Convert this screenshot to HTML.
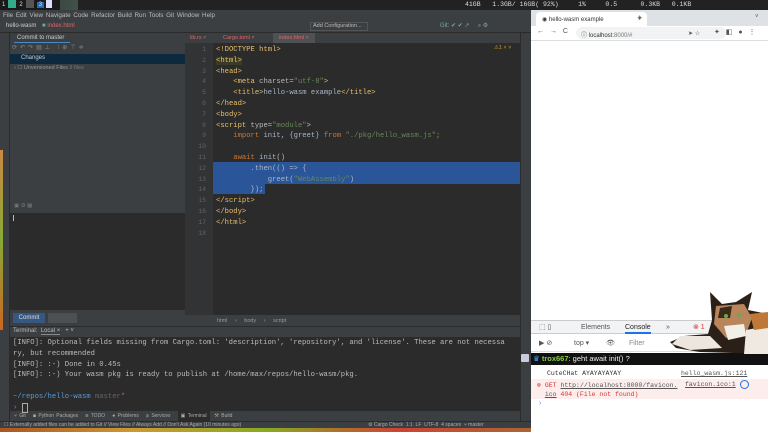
<!DOCTYPE html>
<html><head><style>
*{margin:0;padding:0;box-sizing:border-box}
body{width:768px;height:432px;overflow:hidden;position:relative;background:#5a4a2a;font-family:"Liberation Sans",sans-serif;font-size:6px;color:#bbb}
.a{position:absolute}
.mono{font-family:"Liberation Mono",monospace;font-size:7.2px;white-space:pre}
.t{color:#e8bf6a}.k{color:#cc7832}.s{color:#6a8759}.n{color:#a9b7c6}.at{color:#bababa}
</style></head><body>
<div class="a" style="left:0;top:0;width:768px;height:10px;background:linear-gradient(90deg,#2a3a2a,#6a7a8a 30%,#8a6a4a 50%,#3a4a5a 70%,#6a5a3a)"></div>
<div class="a" style="left:78px;top:0;width:690px;height:10px;background:#222;"></div>
<div class="a" style="left:0;top:0;width:60px;height:10px;background:#1a1a1a;color:#ddd;font-size:6px;line-height:10px"><span style="margin-left:2px">1</span><span style="display:inline-block;width:8px;height:8px;background:#3a8;margin:0 3px;vertical-align:middle"></span>2<span style="display:inline-block;width:8px;height:8px;background:#555;margin:0 3px;vertical-align:middle"></span><span style="background:#2a6ab0;padding:0 2px">3</span><span style="display:inline-block;width:6px;height:8px;background:#ddf;margin-left:2px;vertical-align:middle"></span></div>
<div class="a mono" style="left:465px;top:1px;color:#ddd;font-size:6.5px">41GB   1.3GB/ 16GB( 92%)     1%     0.5      0.3KB   0.1KB</div>
<div class="a" style="left:0;top:10px;width:531px;height:418px;background:#3c3f41"></div>
<div class="a" style="left:3px;top:12px;color:#bbb;font-size:6.3px;word-spacing:1px">File Edit View Navigate Code Refactor Build Run Tools Git Window Help</div>
<div class="a" style="left:6px;top:23px;color:#ccc;font-size:6px">hello-wasm <span style="color:#6a8;margin-left:4px">■</span> <span style="color:#d66">index.html</span></div>
<div class="a" style="left:310px;top:22px;width:58px;height:9px;border:1px solid #555;font-size:5.5px;color:#bbb;padding-left:2px;line-height:7px">Add Configuration...</div>
<div class="a" style="left:440px;top:22px;font-size:6px;color:#7a9">Git: ✔ ✔ ↗ &nbsp;&nbsp;&nbsp; ⌕ ⚙</div>
<div class="a" style="left:0;top:32px;width:531px;height:1px;background:#2b2b2b"></div>
<div class="a" style="left:0;top:33px;width:10px;height:388px;background:#3c3f41;border-right:1px solid #2b2b2b"></div>
<div class="a" style="left:0;top:150px;width:3px;height:180px;background:linear-gradient(#c84,#8a3,#c62)"></div>
<div class="a" style="left:10px;top:33px;width:175px;height:10px;color:#ccc;font-size:6px;padding:2px 0 0 7px">Commit to master<div class="a" style="left:4px;top:9px;width:56px;height:1px;background:#4a88c7"></div></div>
<div class="a" style="left:12px;top:44px;font-size:6px;color:#888;letter-spacing:3px">⟳↶↷▤⊥ ⁞⊕⊤≑</div>
<div class="a" style="left:10px;top:54px;width:175px;height:10px;background:#0d293e"></div>
<div class="a" style="left:21px;top:55px;color:#ccc;font-size:6px">Changes</div>
<div class="a" style="left:14px;top:65px;color:#999;font-size:5.5px">› ☐ Unversioned Files <span style="color:#777">9 files</span></div>
<div class="a" style="left:10px;top:203px;width:175px;height:10px;color:#777;font-size:5.5px;padding-left:4px">▣ ⚙ ▦</div>
<div class="a" style="left:10px;top:213px;width:175px;height:97px;background:#2b2b2b"></div>
<div class="a" style="left:13px;top:215px;width:1px;height:6px;background:#bbb"></div>
<div class="a" style="left:13px;top:313px;width:32px;height:10px;background:#365880;color:#ddd;font-size:6px;text-align:center;line-height:10px">Commit</div>
<div class="a" style="left:48px;top:313px;width:29px;height:10px;background:#4c5052"></div>
<div class="a" style="left:185px;top:33px;width:335px;height:10px;background:#3c3f41;font-size:5.5px;line-height:10px">
<span style="position:absolute;left:5px;color:#d66">lib.rs ×</span><span style="position:absolute;left:38px;color:#d66">Cargo.toml ×</span><span style="position:absolute;left:88px;width:42px;height:10px;background:#4e5254;color:#d66;padding-left:6px">index.html ×</span></div>
<div class="a" style="left:185px;top:43px;width:335px;height:272px;background:#2b2b2b"></div>
<div class="a" style="left:185px;top:43px;width:28px;height:272px;background:#313335"></div>
<div class="a mono" style="left:186px;top:45px;width:20px;text-align:right;color:#606366;line-height:10.8px;font-size:6.5px">1
2
3
4
5
6
7
8
9
10
11
12
13
14
15
16
17
18</div>
<div class="a" style="left:213px;top:162px;width:307px;height:22px;background:#2a5599"></div>
<div class="a" style="left:213px;top:184px;width:52px;height:10px;background:#2a5599"></div>
<div class="a mono" style="left:216px;top:45px;line-height:10.8px"><span class="t">&lt;!DOCTYPE html&gt;</span>
<span class="t" style="background:#3b3b25">&lt;html&gt;</span>
<span class="t">&lt;head&gt;</span>
    <span class="t">&lt;meta </span><span class="at">charset=</span><span class="s">"utf-8"</span><span class="t">&gt;</span>
    <span class="t">&lt;title&gt;</span><span class="n">hello-wasm example</span><span class="t">&lt;/title&gt;</span>
<span class="t">&lt;/head&gt;</span>
<span class="t">&lt;body&gt;</span>
<span class="t">&lt;script </span><span class="at">type=</span><span class="s">"module"</span><span class="t">&gt;</span>
    <span class="k">import </span><span class="n">init, {greet} </span><span class="k">from </span><span class="s">"./pkg/hello_wasm.js"</span><span class="k">;</span>

    <span class="k">await </span><span class="n">init()</span>
<span class="n">        .then(() =&gt; {</span>
<span class="n">            greet(</span><span class="s">"WebAssembly"</span><span class="n">)</span>
<span class="n">        });</span>
<span class="t">&lt;/script&gt;</span>
<span class="t">&lt;/body&gt;</span>
<span class="t">&lt;/html&gt;</span></div>
<div class="a" style="left:494px;top:45px;color:#c9a030;font-size:5.5px">⚠1 ˄ ˅</div>
<div class="a" style="left:520px;top:33px;width:11px;height:388px;background:#3c3f41;border-left:1px solid #2b2b2b"></div>
<div class="a" style="left:185px;top:315px;width:335px;height:11px;background:#3c3f41;color:#999;font-size:5.5px;padding:3px 0 0 32px;word-spacing:6px">html › body › script</div>
<div class="a" style="left:10px;top:326px;width:510px;height:1px;background:#2b2b2b"></div>
<div class="a" style="left:13px;top:328px;color:#bbb;font-size:6px">Terminal: &nbsp;<span style="border-bottom:1px solid #888">Local ×</span> &nbsp; + ˅</div>
<div class="a" style="left:10px;top:337px;width:510px;height:74px;background:#2b2b2b"></div>
<div class="a mono" style="left:13px;top:338px;line-height:10.8px;color:#bbb">[INFO]: Optional fields missing from Cargo.toml: 'description', 'repository', and 'license'. These are not necessa
ry, but recommended
[INFO]: :-) Done in 0.45s
[INFO]: :-) Your wasm pkg is ready to publish at /home/max/repos/hello-wasm/pkg.

<span style="color:#5a9bd5">~/repos/hello-wasm</span> <span style="color:#666">master</span><span style="color:#c66">*</span>
<span style="color:#b6b">›</span> <span style="border:1px solid #aaa">&nbsp;</span></div>
<div class="a" style="left:10px;top:411px;width:520px;height:10px;color:#aaa;font-size:5px;line-height:10px;padding-left:4px;word-spacing:1px">⑂ Git &nbsp; ▤ Python Packages &nbsp; ☰ TODO &nbsp; ● Problems &nbsp; ⚙ Services &nbsp; <span style="background:#2b2b2b;padding:2px 3px">▣ Terminal</span> &nbsp;⚒ Build</div>
<div class="a" style="left:0;top:421px;width:531px;height:8px;background:#3c3f41;border-top:1px solid #2b2b2b;color:#aaa;font-size:5px;line-height:7px;padding-left:4px">☐ Externally added files can be added to Git // View Files // Always Add // Don't Ask Again (10 minutes ago)<span style="position:absolute;left:368px">⚙ Cargo Check &nbsp;1:1 &nbsp;LF &nbsp;UTF-8 &nbsp;4 spaces &nbsp;⑂ master</span></div>
<div class="a" style="left:0;top:428px;width:531px;height:4px;background:linear-gradient(90deg,#a52,#c93,#8a2,#c43,#a63)"></div>
<div class="a" style="left:531px;top:10px;width:237px;height:422px;background:#fff"></div>
<div class="a" style="left:531px;top:10px;width:237px;height:16px;background:#dee1e6"></div>
<div class="a" style="left:536px;top:12px;width:111px;height:14px;background:#fff;border-radius:4px 4px 0 0;font-size:6px;color:#333;padding:4px 0 0 6px">◉ hello-wasm example<span style="position:absolute;left:102px">×</span></div>
<div class="a" style="left:637px;top:13px;font-size:9px;color:#555">+</div>
<div class="a" style="left:755px;top:14px;font-size:6px;color:#555">˅</div>
<div class="a" style="left:537px;top:28px;font-size:7px;color:#555;word-spacing:4px">← → C</div>
<div class="a" style="left:576px;top:27px;width:150px;height:12px;background:#f1f3f4;border-radius:6px;font-size:6px;color:#333;padding:3px 0 0 5px">ⓘ localhost<span style="color:#777">:8000/#</span><span style="position:absolute;left:112px;color:#555">➤ ☆</span></div>
<div class="a" style="left:714px;top:28px;font-size:7px;color:#555;word-spacing:4px">✦ ◧ ● ⋮</div>
<div class="a" style="left:531px;top:40px;width:237px;height:1px;background:#ddd"></div>
<div class="a" style="left:531px;top:320px;width:237px;height:1px;background:#ccc"></div>
<div class="a" style="left:531px;top:321px;width:237px;height:13px;background:#f1f3f4;border-bottom:1px solid #ccc;font-size:7px;color:#555;line-height:13px"><span style="position:absolute;left:8px">⬚ ▯</span><span style="position:absolute;left:50px">Elements</span><span style="position:absolute;left:94px;color:#222;border-bottom:2px solid #1a73e8;height:13px">Console</span><span style="position:absolute;left:135px">»</span><span style="position:absolute;left:162px;color:#d33">⊗ 1</span></div>
<div class="a" style="left:531px;top:335px;width:237px;height:17px;background:#fff;border-bottom:1px solid #ddd;font-size:7px;color:#555;line-height:17px"><span style="position:absolute;left:8px">▶ ⊘</span><span style="position:absolute;left:43px">top ▾</span><span style="position:absolute;left:75px">👁</span><span style="position:absolute;left:98px;color:#888">Filter</span></div>
<div class="a" style="left:531px;top:353px;width:237px;height:12px;background:#111;font-size:7.5px;color:#eee;line-height:12px;padding-left:2px"><span style="color:#4af">♛</span> <b style="color:#8c4">trox667</b>: geht await init() ?</div>
<div class="a mono" style="left:547px;top:370px;font-size:6.5px;color:#333">CuteCHat AYAYAYAYAY<span style="position:absolute;left:134px;text-decoration:underline;color:#555">hello_wasm.js:121</span></div>
<div class="a" style="left:531px;top:379px;width:237px;height:20px;background:#fdeded"></div>
<div class="a mono" style="left:537px;top:381px;font-size:6.5px;color:#d33;line-height:9px"><span>⊗</span> GET <span style="color:#555;text-decoration:underline">http://localhost:8000/favicon.</span>
  <span style="color:#555;text-decoration:underline">ico</span> 404 (File not found)</div>
<div class="a mono" style="left:685px;top:381px;font-size:6.5px;color:#555;text-decoration:underline">favicon.ico:1</div>
<div class="a" style="left:740px;top:380px;width:9px;height:9px;border-radius:50%;border:1px solid #1a73e8"></div>
<div class="a" style="left:539px;top:400px;font-size:7px;color:#4a8af4">›</div>
<svg class="a" style="left:650px;top:290px" width="118" height="64" viewBox="0 0 118 64">
<path d="M60 2 L72 14 L86 12 L102 2 L98 20 L118 24 L118 64 L50 62 L26 58 L20 52 L34 46 L58 44 L62 30 Z" fill="#2a2018"/>
<path d="M66 16 L94 14 L102 28 L96 44 L76 48 L64 34Z" fill="#b8865a"/>
<path d="M70 18 L82 16 L80 28 L68 28Z" fill="#3a2a1a"/>
<path d="M74 36 L94 34 L96 46 L78 50Z" fill="#f2eee8"/>
<path d="M30 46 L60 46 L72 58 L40 60 L22 54Z" fill="#ece6de"/>
<path d="M96 40 L118 36 L118 64 L94 64Z" fill="#efe9e2"/>
<path d="M100 24 L118 22 L118 38 L104 40Z" fill="#c07838"/>
<circle cx="76" cy="26" r="2" fill="#6a5"/><circle cx="89" cy="25" r="2" fill="#6a5"/>
</svg>
<div class="a" style="left:521px;top:354px;width:8px;height:8px;background:#ccd;border-radius:1px"></div>
</body></html>
